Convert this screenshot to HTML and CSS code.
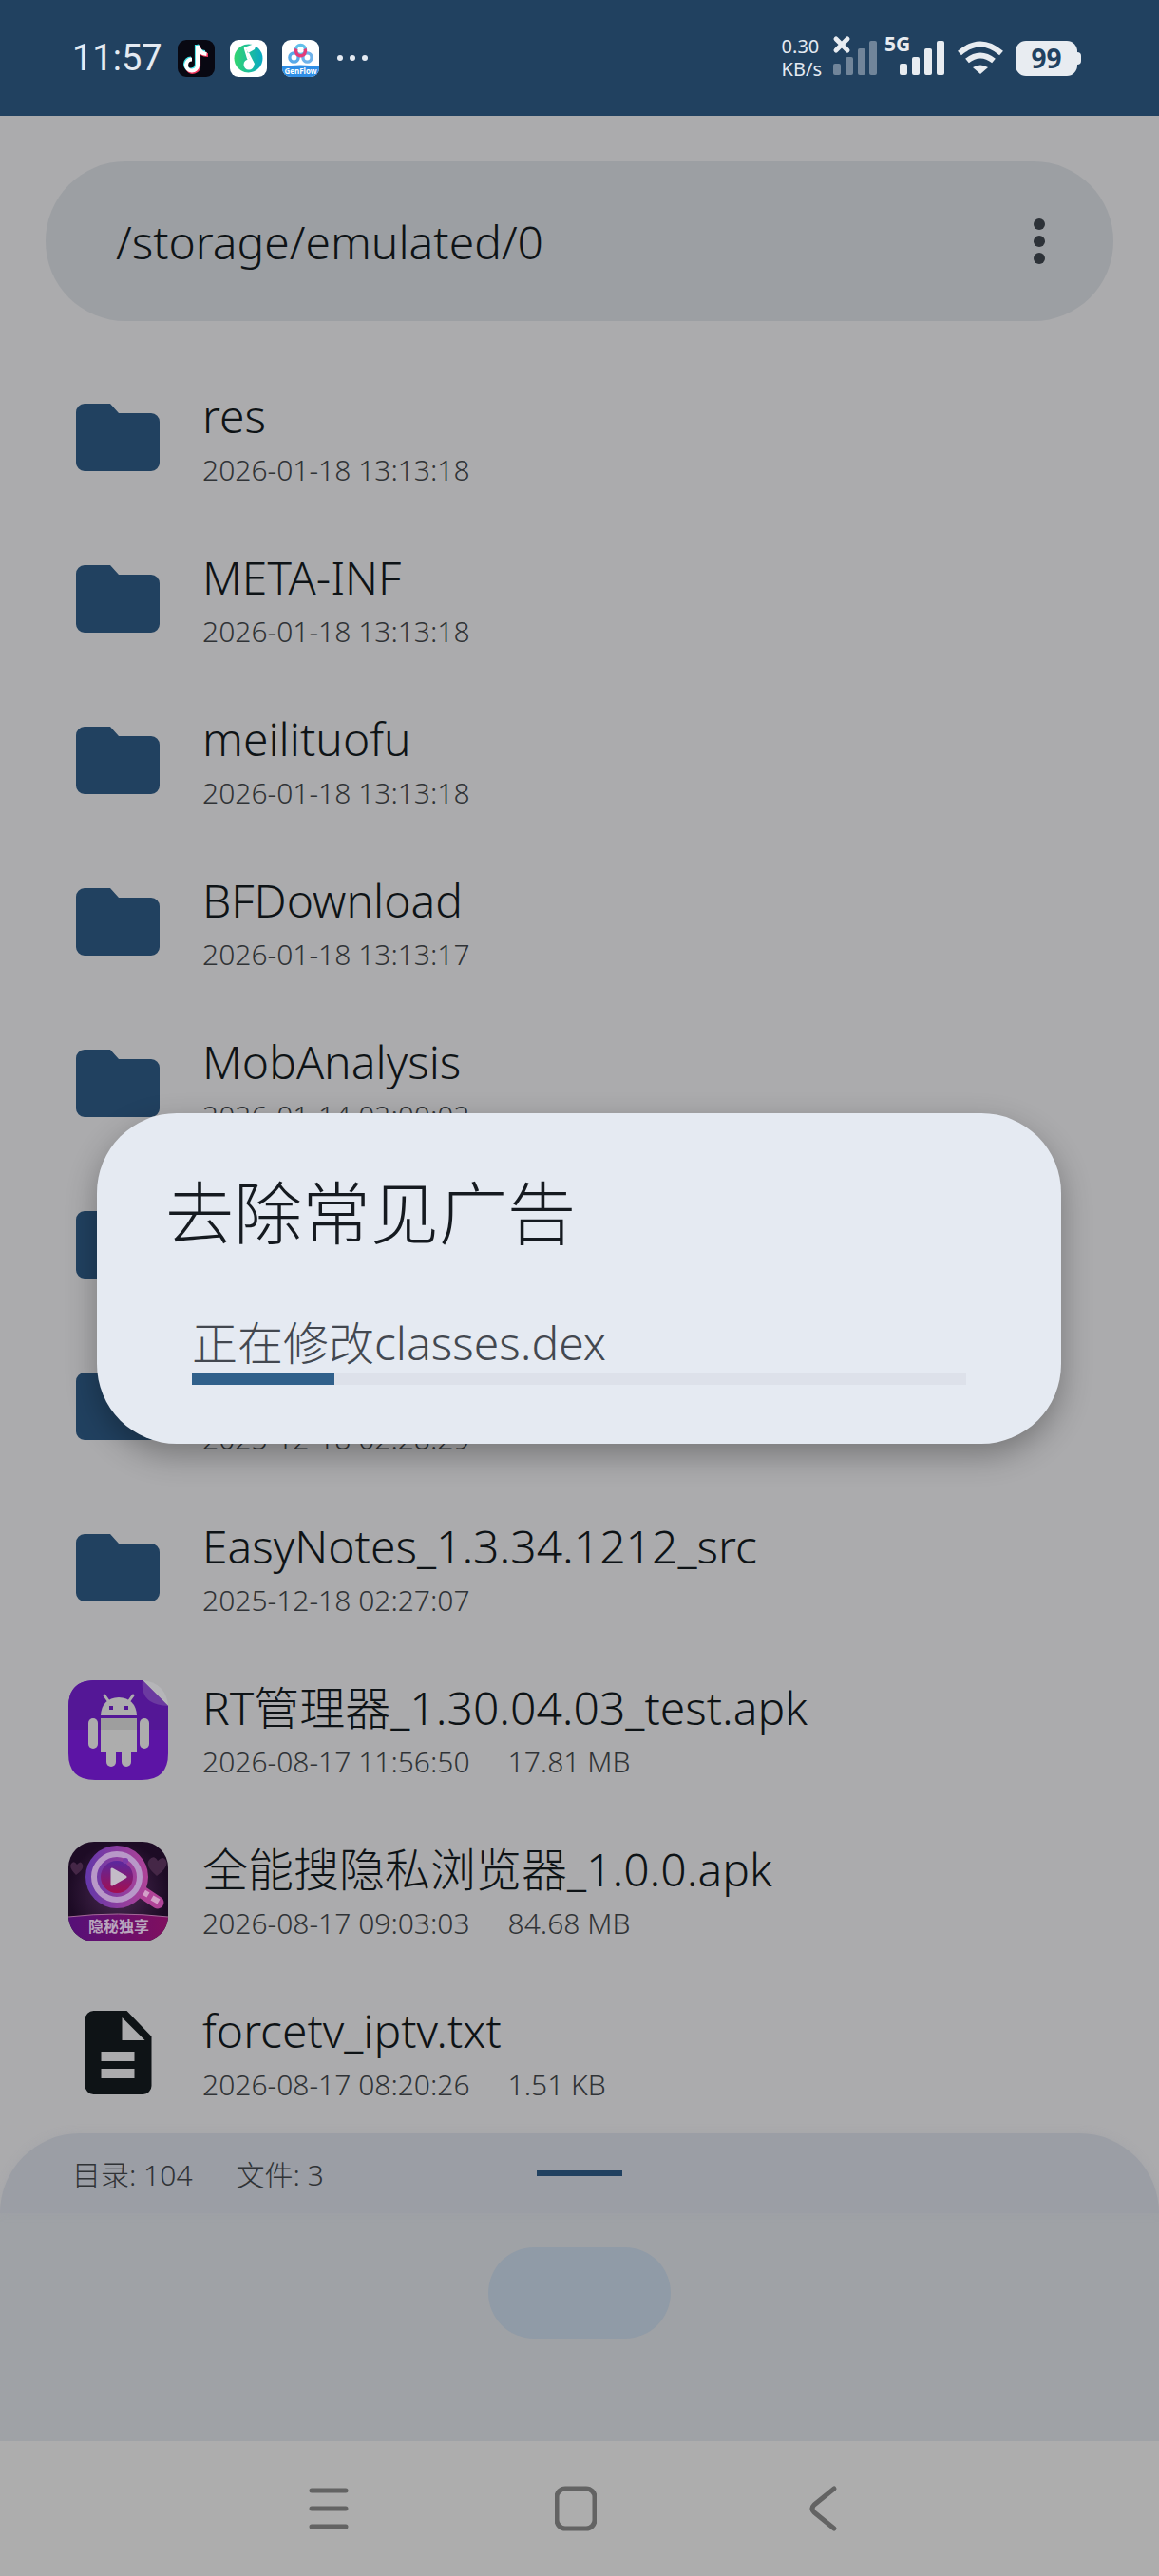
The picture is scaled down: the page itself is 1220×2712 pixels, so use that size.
FILE: index.html
```html
<!DOCTYPE html>
<html lang="zh-CN">
<head>
<meta charset="utf-8">
<meta name="viewport" content="width=device-width, initial-scale=1">
<title>文件管理器</title>
<link rel="stylesheet" href="styles.css">
</head>
<body>
<svg class="defs" aria-hidden="true">
  <symbol id="folder" viewBox="0 0 88 72"><path d="M9 0h27l9 10h34a9 9 0 0 1 9 9v43a9 9 0 0 1-9 9H9a9 9 0 0 1-9-9V9a9 9 0 0 1 9-9z"/></symbol>
</svg>

<header class="status">
  <time class="clock">11:57</time>
  <div class="apps">
    <svg width="39" height="39" viewBox="0 0 39 39"><rect width="39" height="39" rx="9" fill="#080812"/>
      <g fill="none" stroke-width="4.200"><path d="M20 5v21a6 6 0 1 1-6-6.500M20 5c1 5 4 8 9 8" stroke="#3fe0e6"/><path d="M22 7v21a6 6 0 0 1-11 3M22 8c1 5 4 8 10 8" stroke="#f0355c"/><path d="M21 6v21a6 6 0 1 1-6-6.500M21 6c1 5 4 8.500 9.500 9" stroke="#fff"/></g></svg>
    <svg width="39" height="39" viewBox="0 0 39 39"><defs><linearGradient id="mg"><stop offset="0" stop-color="#32d56f"/><stop offset="1" stop-color="#0aa9c4"/></linearGradient></defs><rect width="39" height="39" rx="9" fill="#fff"/><circle cx="19.500" cy="19.500" r="15" fill="url(#mg)"/><path d="M27 5 16 9l3 10 3 6" fill="none" stroke="#fff" stroke-width="2.500" stroke-linejoin="round"/><path d="m17 9 11-5-2 6-7 4z" fill="#fff"/><circle cx="20" cy="26" r="5.500" fill="#fff"/><path d="m19 14 6 12" stroke="#fff" stroke-width="2.500"/></svg>
    <svg width="39" height="39" viewBox="0 0 39 39"><defs><clipPath id="gc"><rect width="39" height="39" rx="9"/></clipPath></defs><g clip-path="url(#gc)"><path d="M0 0h39v39H0z" fill="#fff"/><g fill="none" stroke-width="3.400"><circle cx="12.500" cy="18.500" r="4.600" stroke="#58a9e8"/><circle cx="26.500" cy="18.500" r="4.600" stroke="#6fb2ea"/><circle cx="19.500" cy="10.500" r="5" stroke="#62c0ea"/><path d="M15 9.500a5 5 0 1 0 9 0" stroke="#e33b78"/></g><path d="M0 28q19-3 39 0v11H0z" fill="#2f8ee6"/><text x="19.500" y="36" text-anchor="middle" class="tiny">GenFlow</text></g></svg>
  </div>
  <svg class="more" width="34" height="8" viewBox="0 0 34 8" fill="#e4eaf2"><circle cx="4" cy="4" r="3"/><circle cx="17" cy="4" r="3"/><circle cx="30" cy="4" r="3"/></svg>
  <div class="speed">0.30<br>KB/s</div>
  <svg class="sig" width="118" height="42" viewBox="0 0 118 42" fill="#e8ecf1">
    <path d="m3 3 12 12M15 3 3 15" stroke="#e8ecf1" stroke-width="5" stroke-linecap="round"/>
    <g opacity=".4"><rect y="29" width="8" height="12" rx="2"/><rect x="13" y="22" width="8" height="19" rx="2"/><rect x="26" y="13" width="8" height="28" rx="2"/><rect x="38" y="5" width="8" height="36" rx="2"/></g>
    <text x="54" y="16" class="net">5G</text>
    <rect x="70" y="29" width="8" height="12" rx="2"/><rect x="83" y="22" width="8" height="19" rx="2"/><rect x="96" y="13" width="8" height="28" rx="2"/><rect x="109" y="5" width="8" height="36" rx="2"/>
  </svg>
  <svg class="wifi" width="50" height="36" viewBox="0 0 50 36" fill="none" stroke="#e8ecf1" stroke-width="6"><path d="M3 13Q25-6 47 13"/><path d="M11 21q14-11 28 0"/><path d="M25 35 17 28q8-5 16 0z" fill="#e8ecf1" stroke="none"/></svg>
  <div class="battery"><span>99</span></div>
</header>

<main>
  <div class="path">
    <span>/storage/emulated/0</span>
    <button class="menu" aria-label="更多"><svg width="12" height="48" viewBox="0 0 12 48" fill="#2d3238"><circle cx="6" cy="6" r="6"/><circle cx="6" cy="24" r="6"/><circle cx="6" cy="42" r="6"/></svg></button>
  </div>

  <ul class="files">
    <li><svg class="icon folder"><use href="#folder"/></svg><div><h2>res</h2><p>2026-01-18 13:13:18</p></div></li>
    <li><svg class="icon folder"><use href="#folder"/></svg><div><h2>META-INF</h2><p>2026-01-18 13:13:18</p></div></li>
    <li><svg class="icon folder"><use href="#folder"/></svg><div><h2>meilituofu</h2><p>2026-01-18 13:13:18</p></div></li>
    <li><svg class="icon folder"><use href="#folder"/></svg><div><h2>BFDownload</h2><p>2026-01-18 13:13:17</p></div></li>
    <li><svg class="icon folder"><use href="#folder"/></svg><div><h2>MobAnalysis</h2><p>2026-01-14 02:00:02</p></div></li>
    <li><svg class="icon folder"><use href="#folder"/></svg><div></div></li>
    <li><svg class="icon folder"><use href="#folder"/></svg><div><h2>&nbsp;</h2><p>2025-12-18 02:28:29</p></div></li>
    <li><svg class="icon folder"><use href="#folder"/></svg><div><h2>EasyNotes_1.3.34.1212_src</h2><p>2025-12-18 02:27:07</p></div></li>
    <li>
      <svg class="icon" viewBox="0 0 105 105"><defs><clipPath id="r"><path d="M28 0h50l27 27v50q0 28-28 28H28Q0 105 0 77V28Q0 0 28 0z"/></clipPath></defs>
        <g clip-path="url(#r)"><path d="M0 0h105v105H0z" fill="#5c14a5"/><path d="M0 0h105v52H0z" fill="#541796"/></g>
        <path d="M78 0q12 1 19 8t8 19z" fill="#b5b5b8"/><path d="M78 0q-3 26 27 27z" fill="#6b3aa0"/>
        <g fill="#adadad"><path d="M34 37q1-18 19-19 18 1 19 19z"/><path d="M34 40h38v35H34z"/><rect x="21" y="40" width="10" height="32" rx="5"/><rect x="75" y="40" width="10" height="32" rx="5"/><rect x="40" y="66" width="10" height="25" rx="5"/><rect x="56" y="66" width="10" height="25" rx="5"/></g>
        <path d="m38 16 5 7M68 16l-5 7" stroke="#adadad" stroke-width="3" stroke-linecap="round"/><path d="M43 27h4v4h-4zM59 27h4v4h-4z" fill="#541796"/><path d="M34 40h38v12H34z" fill="#9e9e9e"/></svg>
      <div><h2>RT管理器_1.30.04.03_test.apk</h2><p>2026-08-17 11:56:50<span>17.81 MB</span></p></div></li>
    <li>
      <svg class="icon" viewBox="0 0 105 105"><defs><clipPath id="q"><rect width="105" height="105" rx="27"/></clipPath><radialGradient id="qb"><stop offset="0" stop-color="#4c2b55"/><stop offset="1" stop-color="#1d0b25"/></radialGradient><linearGradient id="qr"><stop offset="0" stop-color="#6337a9"/><stop offset="1" stop-color="#b04397"/></linearGradient><linearGradient id="qf"><stop offset="0" stop-color="#551078"/><stop offset="1" stop-color="#800f5f"/></linearGradient><linearGradient id="qp" x2="0" y2="1"><stop offset="0" stop-color="#5a289f"/><stop offset="1" stop-color="#a30f50"/></linearGradient></defs>
        <g clip-path="url(#q)"><path d="M0 0h105v105H0z" fill="url(#qb)"/><path d="M8 35q-8-8-5-12t6 1q4-5 6 0t-7 11zM93 36q-13-11-8-17t9 1q6-6 9 0t-10 16z" fill="#452747"/>
        <path d="m76 52 18 12" stroke="#b04397" stroke-width="13" stroke-linecap="round"/><path d="m79 53 5 3M88 59l7 4" stroke="#d3a0c8" stroke-width="6"/>
        <circle cx="51" cy="37" r="33" fill="url(#qr)"/><circle cx="51" cy="37" r="24" fill="none" stroke="#b898c8" stroke-width="6"/><circle cx="51" cy="37" r="17" fill="url(#qp)"/><circle cx="60" cy="20" r="3" fill="#7d3ba9"/>
        <path d="M46 29v16l14-8z" fill="#c4bcc8" stroke="#c4bcc8" stroke-width="3" stroke-linejoin="round"/><path d="M0 79q52-6 105 0v26H0z" fill="url(#qf)"/><path d="M0 79q52-6 105 0" fill="none" stroke="#a66a9a"/></g>
        <text x="53" y="95" text-anchor="middle" class="badge">隐秘独享</text></svg>
      <div><h2>全能搜隐私浏览器_1.0.0.apk</h2><p>2026-08-17 09:03:03<span>84.68 MB</span></p></div></li>
    <li>
      <svg class="icon doc" viewBox="0 0 70 88"><path fill-rule="evenodd" d="M9 0h35l26 27v52a9 9 0 0 1-9 9H9a9 9 0 0 1-9-9V9a9 9 0 0 1 9-9zM39 7v24h24zM17 43v10h35V43zM17 61v10h35V61z" fill="#0e1316"/></svg>
      <div><h2>forcetv_iptv.txt</h2><p>2026-08-17 08:20:26<span>1.51 KB</span></p></div></li>
  </ul>
</main>

<footer class="sheet">
  <div class="counts"><span>目录: 104</span><span>文件: 3</span><i class="handle"></i></div>
  <div class="tools"><button class="pill" aria-label="添加"></button></div>
</footer>

<nav class="keys">
  <button aria-label="最近任务"><svg width="44" height="50" viewBox="0 0 44 50"><path d="M4 6h36M4 25h36M4 44h36"/></svg></button>
  <button aria-label="主页"><svg width="44" height="50" viewBox="0 0 44 50"><rect x="2" y="4" width="40" height="42" rx="9"/></svg></button>
  <button aria-label="返回"><svg width="44" height="50" viewBox="0 0 44 50"><path d="M34 4 13 21q-4 4 0 8l21 17"/></svg></button>
</nav>

<div class="overlay">
  <dialog open aria-labelledby="dlg">
    <h1 id="dlg">去除常见广告</h1>
    <div class="job"><label for="bar">正在修改classes.dex</label><progress id="bar" max="815" value="150"></progress></div>
  </dialog>
</div>
</body>
</html>
```
FILE: styles.css
```css
* { box-sizing: border-box; }
body {
  position: relative;
  display: flex;
  flex-direction: column;
  min-height: 100vh;
  margin: 0;
  background: #ababad;
  color: #0e1316;
  font-family: "Noto Sans", "Noto Sans CJK SC", sans-serif;
  font-weight: 300;
}
h1, h2, p, ul { margin: 0; padding: 0; font-weight: 300; }
svg { display: block; flex: none; }
button { display: flex; align-items: center; justify-content: center; padding: 0; border: 0; background: none; }
.defs { position: absolute; width: 0; height: 0; }

.status { display: flex; align-items: center; height: 122px; padding: 0 86px 0 76px; background: #214160; color: #e4eaf2; }
.clock { width: 96px; font-family: Roboto, sans-serif; font-size: 38px; line-height: 48px; font-weight: 400; }
.apps { display: flex; gap: 16px; margin-left: 15px; }
.more { margin-left: 18px; }
.speed { margin-left: auto; margin-right: 12px; font-size: 20px; line-height: 24px; font-weight: 400; }
.sig { margin-bottom: 4px; overflow: visible; }
.wifi { margin-left: 12px; }
.battery { position: relative; display: flex; align-items: center; justify-content: center; width: 65px; height: 37px; margin-left: 12px; border-radius: 11px; background: #e8ecf1; color: #214160; font-size: 28px; font-weight: 700; }
.battery::after { content: ""; position: absolute; left: 65px; width: 4px; height: 13px; border-radius: 0 4px 4px 0; background: #e8ecf1; }
.tiny { font-size: 8px; font-weight: 700; fill: #fff; }
.net { font-size: 21px; font-weight: 700; }

.path { display: flex; align-items: center; justify-content: space-between; height: 168px; margin: 48px 48px 38px; padding: 0 56px 0 74px; border-radius: 84px; background: #9c9fa3; font-size: 48px; }
.menu { width: 44px; height: 96px; }

.files { list-style: none; }
.files li { display: flex; align-items: center; gap: 36px; height: 170px; padding-left: 72px; }
.icon { width: 105px; height: 105px; }
.folder { height: 72px; padding: 0 9px 0 8px; fill: #214160; }
.doc { height: 88px; }
.files h2 { font-size: 48px; line-height: 68px; }
.files p { font-size: 30px; line-height: 46px; color: #303336; }
.files p span { margin-left: 40px; }
.badge { font-size: 16px; font-weight: 700; fill: #b9a6bd; }

.sheet { flex: 1; display: flex; flex-direction: column; background: linear-gradient(#ababad 84px, #9fa2a6 84px); }
.counts { position: relative; display: flex; align-items: center; gap: 46px; height: 84px; padding: 0 76px; border-radius: 84px 84px 0 0; background: #9b9ea5; box-shadow: 0 0 8px #9b9ea566; color: #303336; font-size: 30px; }
.handle { position: absolute; left: 50%; width: 90px; height: 6px; margin-left: -45px; background: #214160; }
.tools { display: flex; justify-content: center; padding-top: 36px; }
.pill { width: 192px; height: 96px; border-radius: 48px; background: #909ba7; }

.keys { display: flex; justify-content: center; gap: 216px; height: 142px; padding-right: 8px; background: #adadad; }
.keys svg { fill: none; stroke: #636363; stroke-width: 5; stroke-linecap: round; stroke-linejoin: round; }

.overlay { position: absolute; inset: 0; display: flex; align-items: center; justify-content: center; padding: 0 103px 20px 102px; }
dialog { position: static; width: 100%; margin: 0; padding: 60px 100px 62px 72px; border: 0; border-radius: 84px; background: #e5eaf2; color: #151a20; box-shadow: 0 12px 32px #0000004d; }
h1 { font-size: 72px; line-height: 88px; }
.job { display: flex; flex-direction: column; padding: 62px 0 0 28px; }
label { font-size: 48px; line-height: 64px; color: #434850; }
progress { appearance: none; width: 100%; height: 12px; border: 0; background: #dde1ea; }
progress::-webkit-progress-bar { background: #dde1ea; }
progress::-webkit-progress-value { background: #30608b; }
```
